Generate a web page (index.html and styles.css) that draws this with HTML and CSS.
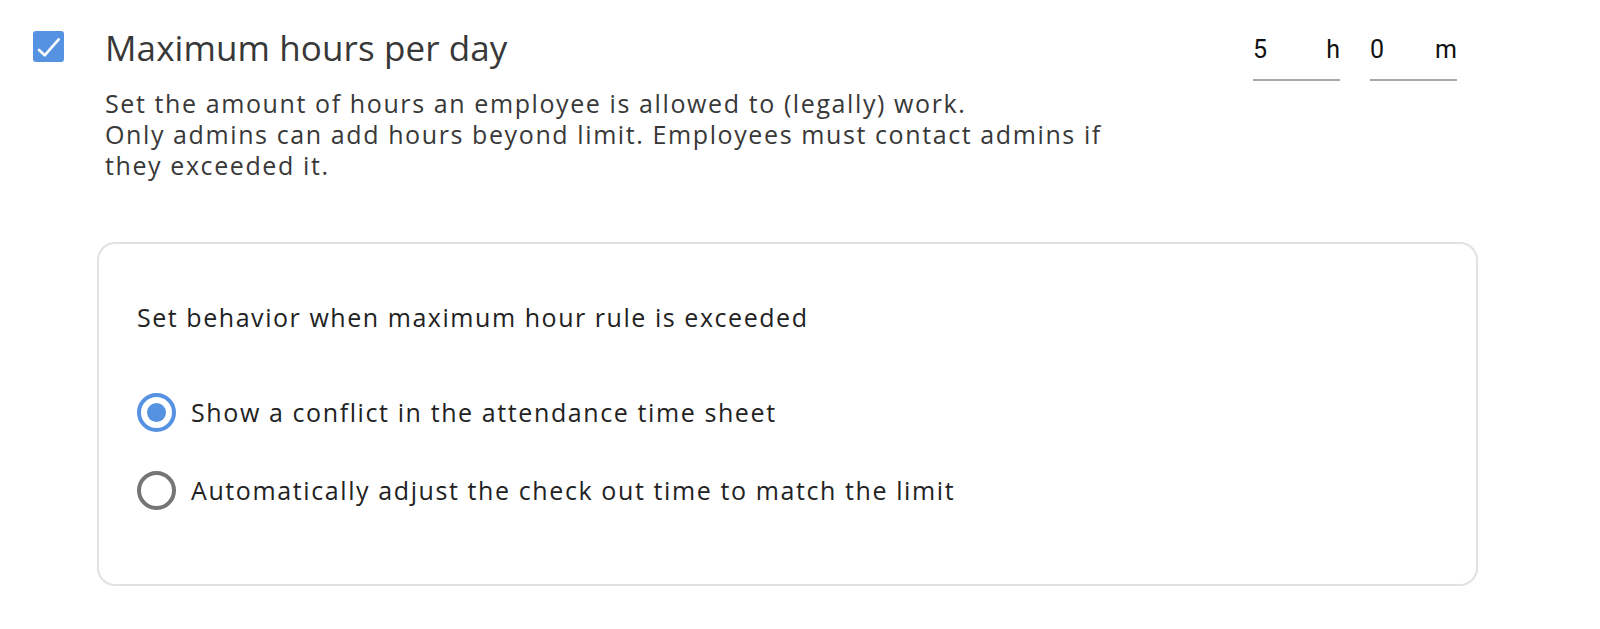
FILE: index.html
```html
<!DOCTYPE html>
<html lang="en">
<head>
<meta charset="utf-8">
<title>Maximum hours per day</title>
<link rel="stylesheet" href="styles.css">
</head>
<body>
<div class="page">
  <div class="header">
    <span class="checkbox" role="checkbox" aria-checked="true">
      <svg width="31" height="31" viewBox="0 0 31 31"><polyline points="6,19 11.7,24.3 25.7,8.3" fill="none" stroke="#fff" stroke-width="2.6" stroke-linecap="round" stroke-linejoin="round"/></svg>
    </span>
    <div class="content">
      <h1 class="title">Maximum hours per day</h1>
      <p class="desc">Set the amount of hours an employee is allowed to (legally) work.<br>Only admins can add hours beyond limit. Employees must contact admins if they exceeded it.</p>
    </div>
    <div class="time">
      <div class="field"><span class="val">5</span><span class="unit">h</span></div>
      <div class="field"><span class="val">0</span><span class="unit">m</span></div>
    </div>
  </div>
  <div class="box">
    <p class="box-title">Set behavior when maximum hour rule is exceeded</p>
    <div class="options">
      <label class="option"><span class="radio checked"><span class="dot"></span></span><span class="opt-text">Show a conflict in the attendance time sheet</span></label>
      <label class="option"><span class="radio"></span><span class="opt-text">Automatically adjust the check out time to match the limit</span></label>
    </div>
  </div>
</div>
</body>
</html>
```
FILE: styles.css
```css
html, body {
  margin: 0;
  padding: 0;
  background: #ffffff;
}
body {
  font-family: "Open Sans", "Noto Sans", sans-serif;
  color: #333333;
}
.page {
  padding: 24px 0 0 33px;
}
.header {
  display: flex;
  align-items: flex-start;
  padding-right: 143px;
}
.checkbox {
  flex: none;
  width: 31px;
  height: 31px;
  margin-top: 7px;
  border-radius: 3px;
  background: #5592e2;
  display: block;
}
.checkbox svg {
  display: block;
}
.content {
  flex: 1;
  margin-left: 41px;
}
.title {
  margin: 0;
  font-size: 35px;
  font-weight: 400;
  line-height: 48px;
  color: #383838;
  letter-spacing: 0.1px;
}
.desc {
  margin: 16px 0 0 0;
  max-width: 1000px;
  font-size: 25px;
  line-height: 31px;
  letter-spacing: 1.6px;
  color: #383838;
}
.time {
  flex: none;
  display: flex;
  gap: 30px;
  margin-top: 11px;
}
.field {
  width: 87px;
  display: flex;
  justify-content: space-between;
  font-family: Roboto, "Liberation Sans", sans-serif;
  font-size: 25px;
  line-height: 30px;
  color: #111111;
  padding-bottom: 14px;
  border-bottom: 2px solid #a8a8a8;
}
.box {
  margin: 61px 122px 0 64px;
  border: 2px solid #e1e1e1;
  border-radius: 18px;
  padding: 58px 38px 74px 38px;
}
.box-title {
  margin: 0;
  font-size: 25px;
  line-height: 31px;
  letter-spacing: 1.55px;
  color: #222222;
}
.options {
  display: flex;
  flex-direction: column;
  gap: 39px;
  margin-top: 60px;
}
.option {
  display: flex;
  align-items: center;
  gap: 15px;
}
.radio {
  flex: none;
  box-sizing: border-box;
  width: 39px;
  height: 39px;
  border-radius: 50%;
  border: 4px solid #757575;
  display: flex;
  align-items: center;
  justify-content: center;
}
.radio.checked {
  border-color: #5592e2;
}
.dot {
  width: 19px;
  height: 19px;
  border-radius: 50%;
  background: #5592e2;
}
.opt-text {
  font-size: 25px;
  line-height: 31px;
  letter-spacing: 1.6px;
  color: #222222;
}
```
